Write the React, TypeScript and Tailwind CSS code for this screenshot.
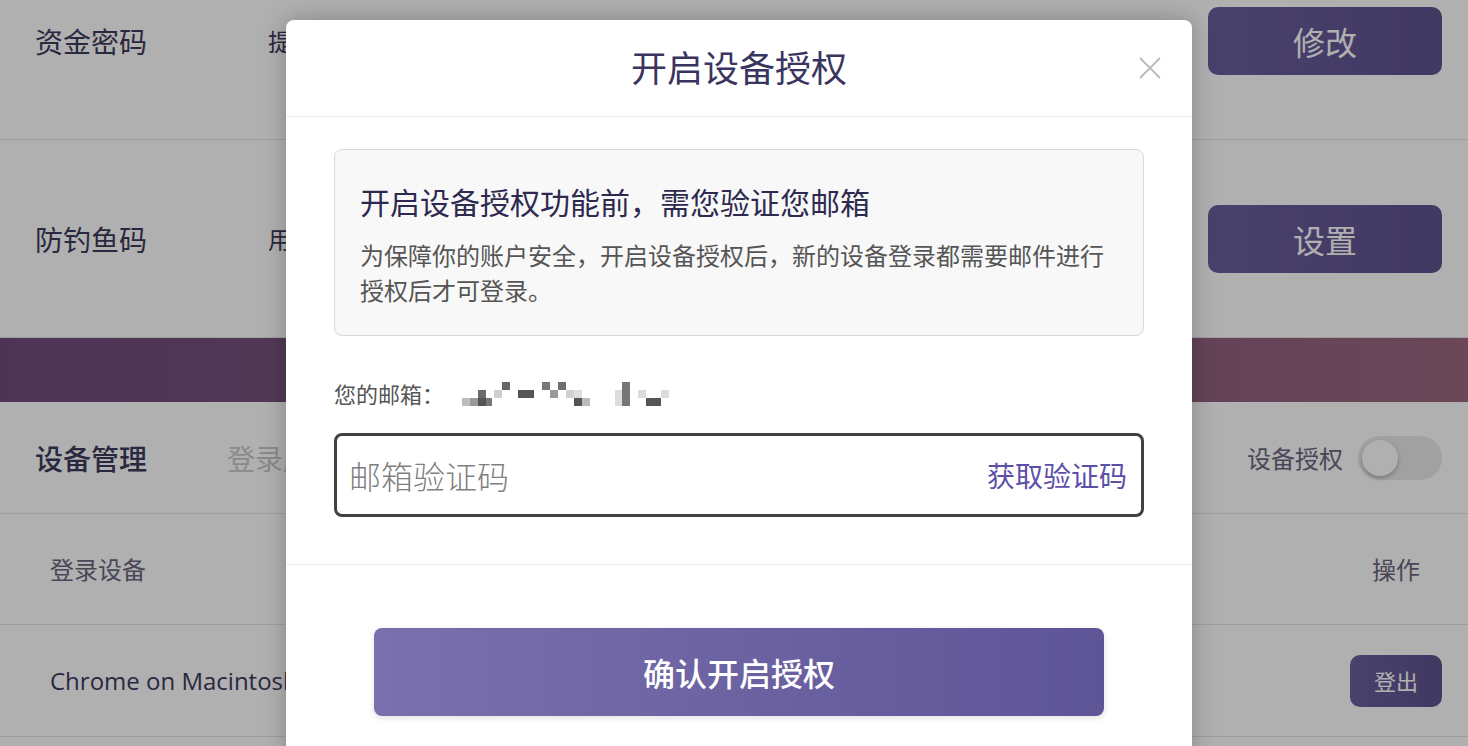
import React from "react";

const cjk = '"Noto Sans CJK SC", "Noto Sans", sans-serif';
const latin = '"Open Sans", "Noto Sans CJK SC", sans-serif';

function PurpleButton({ label, className }: { label: string; className: string }) {
  return (
    <button
      className={
        "flex items-center justify-center rounded-[10px] bg-gradient-to-r from-[#6b5f9e] to-[#5e538f] text-white " +
        className
      }
    >
      {label}
    </button>
  );
}

function SettingRow({ title, desc, action }: { title: string; desc: string; action: string }) {
  return (
    <div className="flex h-[198px] items-center border-b border-[#e6e6e6] pl-[35px] pr-[26px]">
      <div className="w-[233px] text-[28px] text-[#3d3a5c]">{title}</div>
      <div className="flex-1 text-[24px] text-[#3d3a5c]">{desc}</div>
      <PurpleButton label={action} className="h-[68px] w-[234px] text-[32px]" />
    </div>
  );
}

function Toggle() {
  return (
    <div className="flex h-[44px] w-[84px] items-center rounded-full bg-[#e9e9e9] px-[4px]">
      <div className="h-[36px] w-[36px] rounded-full bg-white shadow-[0_2px_4px_rgba(0,0,0,0.25)]" />
    </div>
  );
}

// pixelated (mosaic) email address
const blocks: [number, number, number, number, string][] = [
  [1, 19, 8, 8, "#bdbdbd"],
  [9, 19, 8, 8, "#9a9a9a"],
  [17, 11, 8, 8, "#6a6a6a"],
  [17, 19, 8, 8, "#555"],
  [25, 19, 6, 8, "#777"],
  [33, 11, 8, 8, "#cfcfcf"],
  [41, 3, 8, 8, "#666"],
  [57, 11, 16, 8, "#555"],
  [81, 3, 8, 8, "#777"],
  [89, 11, 8, 8, "#9a9a9a"],
  [97, 3, 8, 8, "#6e6e6e"],
  [105, 11, 8, 8, "#d0d0d0"],
  [113, 11, 8, 8, "#dedede"],
  [113, 19, 8, 8, "#555"],
  [121, 19, 8, 8, "#bbb"],
  [154, 11, 7, 16, "#dcdcdc"],
  [161, 3, 8, 24, "#777"],
  [177, 11, 8, 8, "#dcdcdc"],
  [185, 19, 15, 8, "#555"],
  [200, 11, 8, 8, "#dcdcdc"],
];

function MaskedEmail() {
  return (
    <svg width="210" height="28" viewBox="0 0 210 28" className="block">
      {blocks.map(([x, y, w, h, c], i) => (
        <rect key={i} x={x} y={y} width={w} height={h} fill={c} />
      ))}
    </svg>
  );
}

function AuthModal() {
  return (
    <div
      className="absolute left-[286px] top-[20px] w-[906px] rounded-t-[8px] bg-white shadow-[0_0_24px_rgba(0,0,0,0.25)]"
      style={{ fontFamily: cjk }}
    >
      <div className="relative flex h-[97px] items-center justify-center border-b border-[#ececec]">
        <h2 className="-mt-[4px] text-[36px] leading-none text-[#3a3560]">开启设备授权</h2>
        <button className="absolute right-[30px] top-[36px] text-[#bbbbbb]">
          <svg width="24" height="24" viewBox="0 0 24 24" fill="none" stroke="currentColor" strokeWidth="1.8">
            <path d="M2 2 L22 22 M22 2 L2 22" />
          </svg>
        </button>
      </div>

      <div className="border-b border-[#ececec] px-[48px] pb-[47px] pt-[32px]">
        <div className="rounded-[8px] border border-[#d9d9d9] bg-[#f8f8f8] pb-[28px] pl-[25px] pr-[20px] pt-[29px]">
          <div className="text-[30px] leading-[44px] text-[#2e2a4f]">开启设备授权功能前，需您验证您邮箱</div>
          <p className="mt-[14px] text-[24px] leading-[35px] text-[#555]">
            为保障你的账户安全，开启设备授权后，新的设备登录都需要邮件进行授权后才可登录。
          </p>
        </div>

        <div className="mt-[42px] flex h-[30px] items-center">
          <span className="w-[127px] text-[22px] text-[#555]">您的邮箱：</span>
          <MaskedEmail />
        </div>

        <div className="mt-[25px] flex h-[84px] items-center rounded-[8px] border-[3px] border-[#404040] pl-[12px] pr-[14px]">
          <span className="flex-1 text-[32px] font-light text-[#7f7f7f]">邮箱验证码</span>
          <span className="text-[28px] text-[#5b4fa8]">获取验证码</span>
        </div>
      </div>

      <div className="px-[88px] pb-[40px] pt-[63px]">
        <button className="flex h-[88px] w-full items-center justify-center rounded-[8px] bg-gradient-to-r from-[#7a70ad] to-[#5e5597] text-[32px] font-medium text-white shadow-[0_2px_6px_rgba(0,0,0,0.12)]">
          确认开启授权
        </button>
      </div>
    </div>
  );
}

export default function App() {
  return (
    <div className="relative h-[746px] w-full overflow-hidden bg-white" style={{ fontFamily: cjk }}>
      <div className="-mt-[58px]">
        <SettingRow title="资金密码" desc="提现时" action="修改" />
        <SettingRow title="防钓鱼码" desc="用于识" action="设置" />

        <div className="h-[64px] bg-gradient-to-r from-[#704c7c] to-[#9b6780]" />

        <div className="flex h-[112px] items-center border-b border-[#e6e6e6] pl-[35px] pr-[26px]">
          <div className="w-[192px] text-[28px] font-medium text-[#3d3a5c]">设备管理</div>
          <div className="flex-1 text-[28px] text-[#c9c9c9]">登录历史</div>
          <span className="mr-[15px] text-[24px] text-[#6a677e]">设备授权</span>
          <Toggle />
        </div>

        <div className="flex h-[111px] items-center border-b border-[#e6e6e6] pl-[50px] pr-[26px]">
          <div className="flex-1 text-[24px] text-[#6a677e]">登录设备</div>
          <div className="w-[92px] text-center text-[24px] text-[#6a677e]">操作</div>
        </div>

        <div className="flex h-[112px] items-center border-b border-[#e6e6e6] pl-[50px] pr-[26px]">
          <div className="flex-1 text-[24px] text-[#3d3a5c]" style={{ fontFamily: latin }}>
            Chrome on Macintosh
          </div>
          <PurpleButton label="登出" className="h-[52px] w-[92px] text-[22px]" />
        </div>
      </div>

      <div className="absolute inset-0 bg-[rgba(0,0,0,0.31)]" />

      <AuthModal />
    </div>
  );
}
